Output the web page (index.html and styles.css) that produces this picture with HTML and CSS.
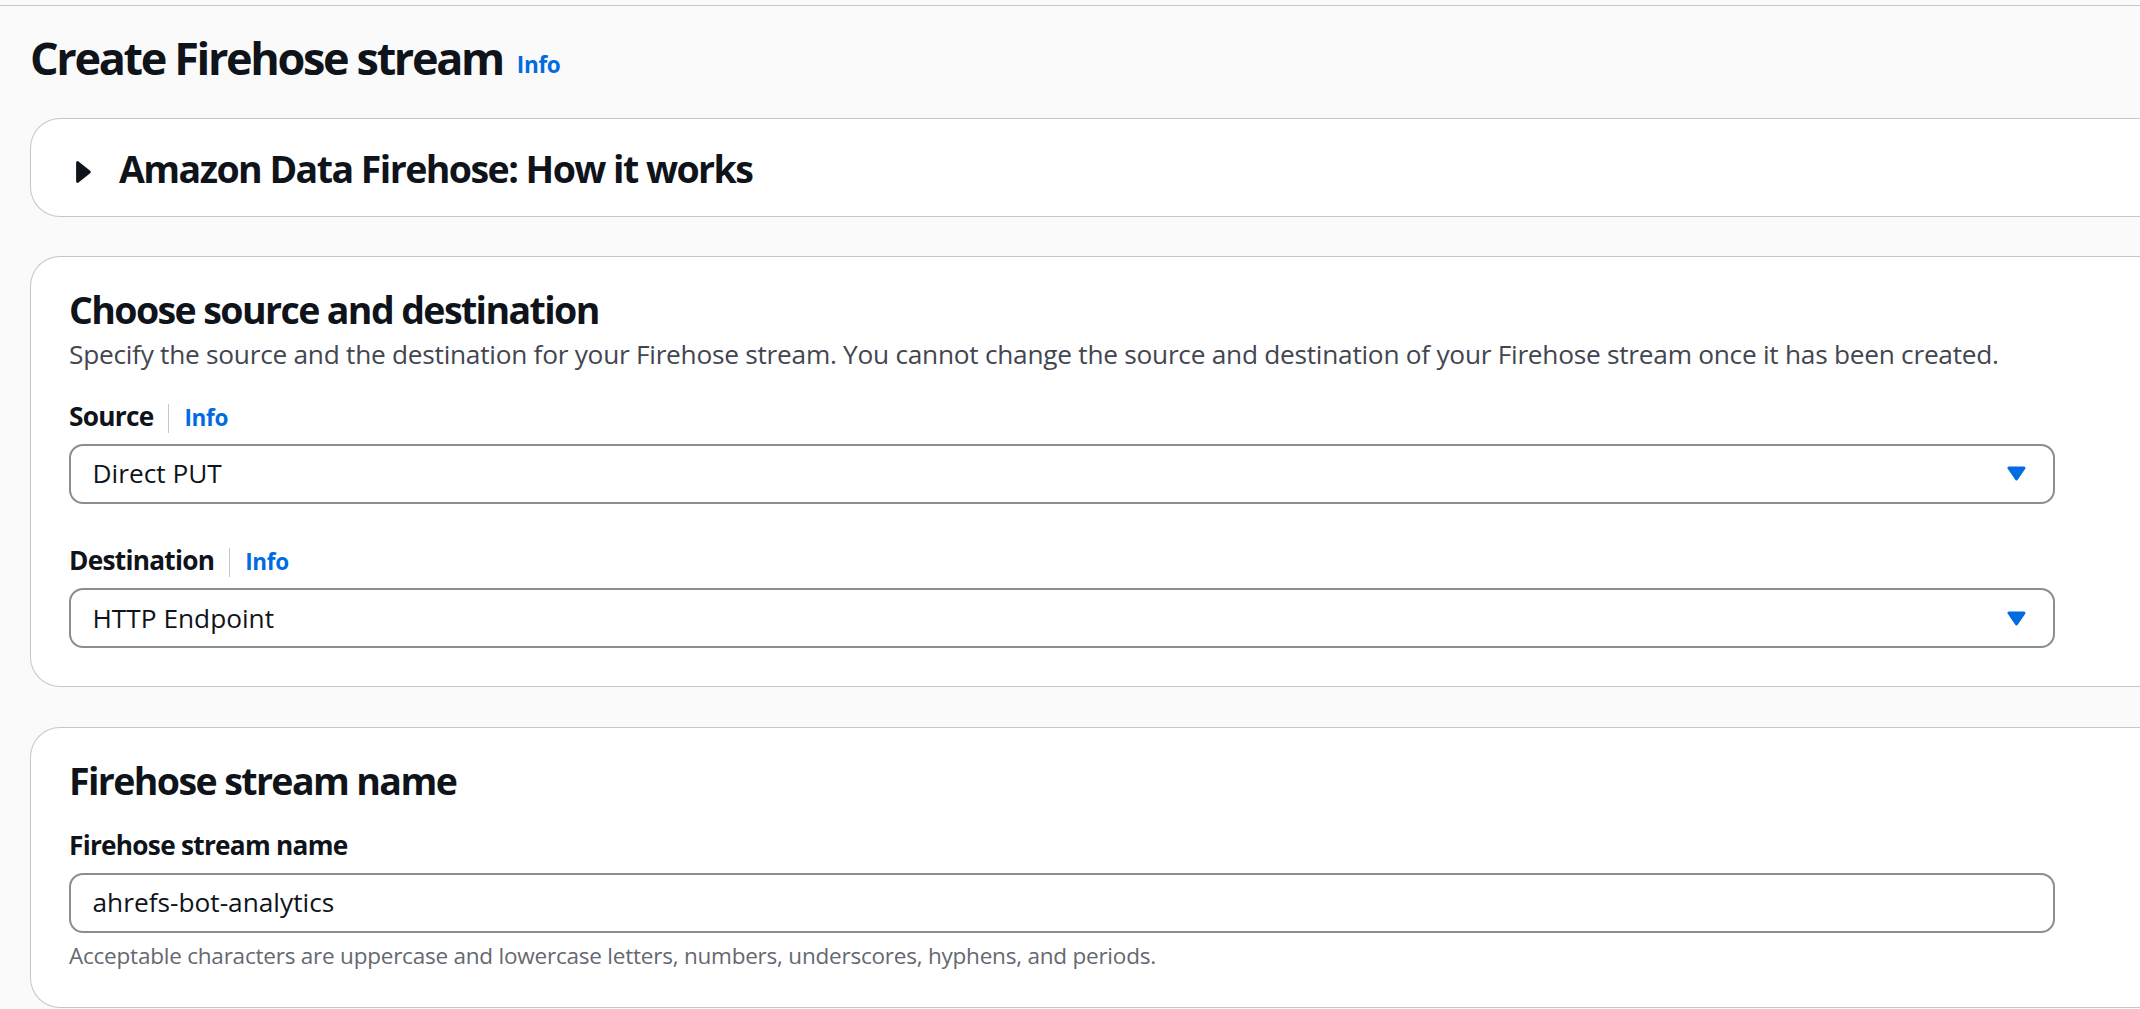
FILE: index.html
```html
<!DOCTYPE html>
<html lang="en">
<head>
<meta charset="utf-8">
<title>Create Firehose stream</title>
<link rel="stylesheet" href="styles.css">
</head>
<body>
<div class="app">
  <main class="page">
    <header class="page-header">
      <h1 class="title">Create Firehose stream</h1><a class="info info-title" href="#">Info</a>
    </header>

    <section class="card card-expand">
      <div class="expand-header">
        <svg class="caret-right" width="15" height="22" viewBox="0 0 15 22" aria-hidden="true"><path d="M1.6 1.6 L13.2 11 L1.6 20.4 Z" fill="#0f141a" stroke="#0f141a" stroke-width="3" stroke-linejoin="round"/></svg>
        <h2 class="h2 h2-expand">Amazon Data Firehose: How it works</h2>
      </div>
    </section>

    <section class="card card-form">
      <h2 class="h2">Choose source and destination</h2>
      <p class="desc">Specify the source and the destination for your Firehose stream. You cannot change the source and destination of your Firehose stream once it has been created.</p>

      <div class="field field-first">
        <div class="label-row"><span class="label">Source</span><span class="sep"></span><a class="info" href="#">Info</a></div>
        <div class="select"><span class="value">Direct PUT</span><svg class="caret-down" width="19" height="15" viewBox="0 0 19 15" aria-hidden="true"><path d="M2 2 H17 L9.5 13 Z" fill="#006ce0" stroke="#006ce0" stroke-width="3" stroke-linejoin="round"/></svg></div>
      </div>

      <div class="field">
        <div class="label-row"><span class="label">Destination</span><span class="sep"></span><a class="info" href="#">Info</a></div>
        <div class="select"><span class="value">HTTP Endpoint</span><svg class="caret-down" width="19" height="15" viewBox="0 0 19 15" aria-hidden="true"><path d="M2 2 H17 L9.5 13 Z" fill="#006ce0" stroke="#006ce0" stroke-width="3" stroke-linejoin="round"/></svg></div>
      </div>
    </section>

    <section class="card card-form card-name">
      <h2 class="h2">Firehose stream name</h2>
      <div class="field field-name">
        <div class="label-row"><span class="label">Firehose stream name</span></div>
        <div class="input"><span class="value">ahrefs-bot-analytics</span></div>
        <p class="constraint">Acceptable characters are uppercase and lowercase letters, numbers, underscores, hyphens, and periods.</p>
      </div>
    </section>
  </main>
</div>
</body>
</html>
```

FILE: styles.css
```css
html, body {
  margin: 0;
  padding: 0;
}

body {
  background: #fafafa;
  font-family: "Open Sans", "Noto Sans", sans-serif;
  color: #0f141a;
  overflow: hidden;
  width: 2140px;
  height: 1009px;
}

.app {
  margin-top: 5px;
  border-top: 1px solid #c6c6cd;
}

.page {
  padding: 24.4px 0 0 30px;
  width: 2300px;
}

.page-header {
  font-size: 45px;
  line-height: 56.25px;
  height: 56.25px;
  white-space: nowrap;
}

.title {
  display: inline;
  margin: 0;
  font-size: 45px;
  line-height: 56.25px;
  font-weight: 700;
  letter-spacing: -2.35px;
}

.info {
  color: #006ce0;
  font-size: 22.5px;
  font-weight: 700;
  text-decoration: none;
  line-height: 30px;
  letter-spacing: -0.3px;
}

.info-title {
  margin-left: 14px;
  vertical-align: 2px;
}

.card {
  background: #ffffff;
  border: 1px solid #c6c6cd;
  border-right: none;
  border-radius: 30px 0 0 30px;
}

.card-expand {
  margin-top: 31.6px;
  padding: 27px 0 25px 45px;
}

.expand-header {
  display: flex;
  align-items: flex-start;
}

.caret-right {
  flex: none;
  margin-top: 14.5px;
  margin-right: 28px;
}

.h2 {
  margin: 0;
  font-size: 37.5px;
  line-height: 45px;
  font-weight: 700;
  letter-spacing: -1.6px;
}

.h2-expand {
  letter-spacing: -1.55px;
}

.card-form {
  margin-top: 39.2px;
  padding: 30px 0 38px 38px;
}

.card-name {
  padding-bottom: 36px;
}

.desc {
  margin: 4px 0 0 0;
  font-size: 26.25px;
  line-height: 37.5px;
  color: #424650;
  letter-spacing: -0.26px;
}

.field {
  margin-top: 38.5px;
}

.field-first,
.field-name {
  margin-top: 24px;
}

.label-row {
  display: flex;
  align-items: baseline;
  height: 37.5px;
}

.label {
  font-size: 26.25px;
  line-height: 37.5px;
  font-weight: 700;
  letter-spacing: -0.75px;
}

.sep {
  align-self: center;
  width: 1px;
  height: 29px;
  margin: 3px 15px 0 15px;
  background: #c6c6cd;
}

.select,
.input {
  box-sizing: border-box;
  width: 1986px;
  height: 60px;
  margin-top: 8.5px;
  border: 2px solid #8c8c94;
  border-radius: 14px;
  background: #ffffff;
  padding: 0 27px 0 21.5px;
  display: flex;
  align-items: center;
  justify-content: space-between;
}

.value {
  font-size: 26.25px;
  line-height: 37.5px;
  color: #0f141a;
}

.caret-down {
  flex: none;
}

.constraint {
  margin: 8.5px 0 0 0;
  font-size: 22.5px;
  line-height: 30px;
  color: #656871;
  letter-spacing: -0.22px;
}
```
